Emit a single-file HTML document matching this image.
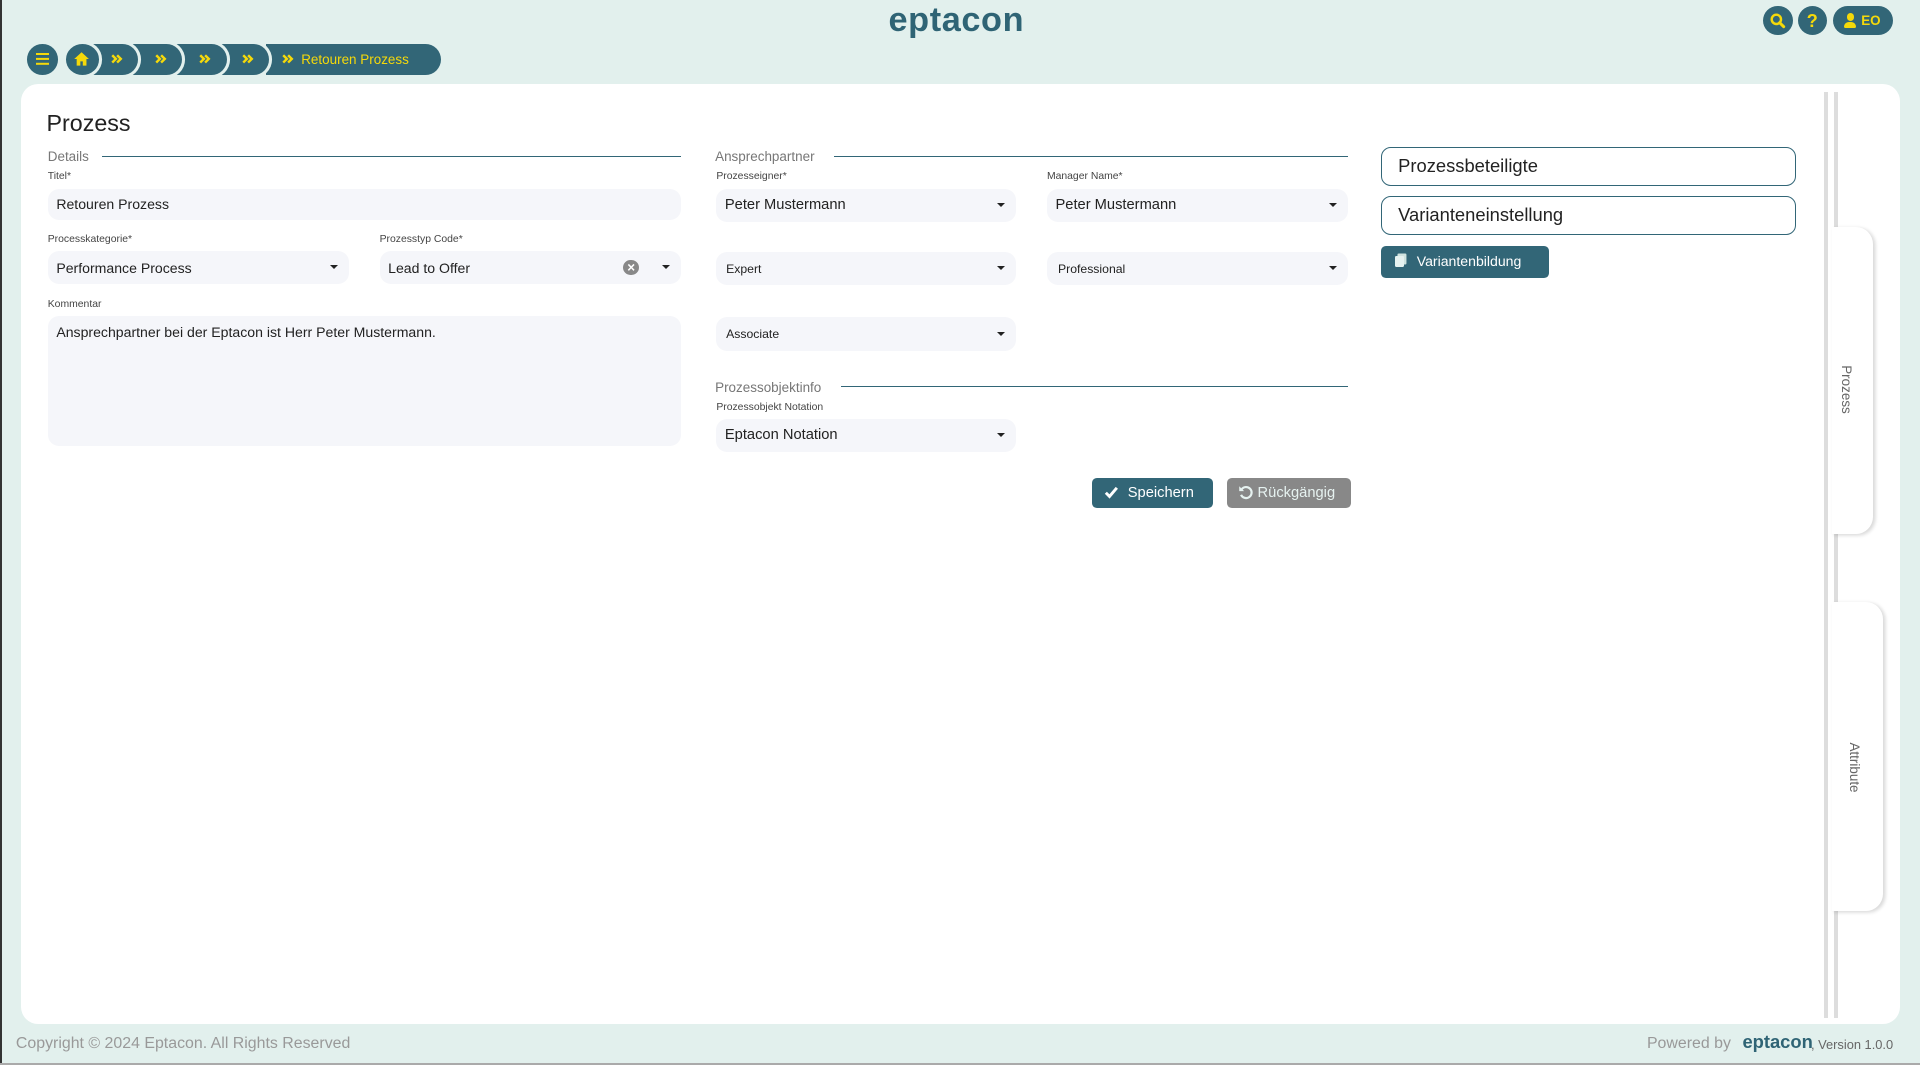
<!DOCTYPE html>
<html><head><meta charset="utf-8"><style>
html,body{margin:0;padding:0;width:1920px;height:1065px;overflow:hidden;background:#e2f0ed}
#w{position:absolute;left:0;top:0;width:1568px;height:870px;zoom:1.2244898;font-family:"Liberation Sans",sans-serif;color:#222}
.a{position:absolute}
.c{border-radius:50%;background:#326677}
.in{position:absolute;background:#f5f6fa;border-radius:9px;font-size:11.5px;color:#222;box-sizing:border-box;padding-left:7px;display:flex;align-items:center}
.lbl{position:absolute;font-size:8.5px;color:#444}
.sec{position:absolute;font-size:11px;color:#777}
.ln{position:absolute;height:1.2px;background:#326677}
.car{position:absolute;right:9px;top:50%;margin-top:-2px;width:0;height:0;border-left:3.5px solid transparent;border-right:3.5px solid transparent;border-top:4px solid #222}
.bc{position:absolute;top:36px;height:25px;background:#326677;border-radius:0 13px 13px 0;box-shadow:0 0 0 2.5px #e2f0ed;color:#f5d90a;font-size:11px;display:flex;align-items:center}
</style></head><body><div id="w">
<svg width="0" height="0" style="position:absolute"><defs><symbol id="ch" viewBox="0 0 10 8"><path d="M1 1l3 3-3 3M5 1l3 3-3 3" fill="none" stroke="#f5d90a" stroke-width="2"/></symbol></defs></svg>
<div class="a" style="left:0;top:0;width:2px;height:870px;background:#333"></div>
<div class="a" style="left:0;top:868px;width:1568px;height:2px;background:#aaa"></div>
<div class="a" style="left:700px;top:1px;width:162px;text-align:center;font-size:28px;font-weight:bold;color:#2f6475;letter-spacing:0.5px">eptacon</div>
<div class="a c" style="left:1440px;top:5px;width:24px;height:24px"></div>
<svg class="a" style="left:1445px;top:10px" width="14" height="14" viewBox="0 0 14 14"><circle cx="6" cy="6" r="3.8" fill="none" stroke="#f5d90a" stroke-width="2"/><path d="M8.7 8.7L12 12" stroke="#f5d90a" stroke-width="2.4" stroke-linecap="round"/></svg>
<div class="a c" style="left:1468px;top:5px;width:24px;height:24px;color:#f5d90a;font-weight:bold;font-size:15px;text-align:center;line-height:24px">?</div>
<div class="a" style="left:1497px;top:5px;width:49px;height:24px;border-radius:12px;background:#326677;color:#f5d90a;font-weight:bold;font-size:11px;line-height:24px"><span style="position:absolute;left:11px;top:6px;width:6px;height:6px;border-radius:50%;background:#f5d90a"></span><span style="position:absolute;left:9px;top:13px;width:10px;height:5px;border-radius:4px 4px 1px 1px;background:#f5d90a"></span><span style="position:absolute;left:23px">EO</span></div>

<div class="a c" style="left:22px;top:36px;width:25px;height:25px"></div>
<div class="a" style="left:29px;top:43px;width:11px;height:2px;background:#f5d90a;box-shadow:0 4px 0 #f5d90a,0 8px 0 #f5d90a"></div>
<div class="bc" style="left:217px;width:143px;padding-left:13px;box-sizing:border-box"><svg width="10" height="8" style="margin-right:6px"><use href="#ch"/></svg>Retouren Prozess</div>
<div class="bc" style="left:173px;width:47px;justify-content:center;padding-left:12px;box-sizing:border-box"><svg width="10" height="8"><use href="#ch"/></svg></div>
<div class="bc" style="left:138px;width:47px;justify-content:center;padding-left:12px;box-sizing:border-box"><svg width="10" height="8"><use href="#ch"/></svg></div>
<div class="bc" style="left:102px;width:47px;justify-content:center;padding-left:12px;box-sizing:border-box"><svg width="10" height="8"><use href="#ch"/></svg></div>
<div class="bc" style="left:66px;width:47px;justify-content:center;padding-left:12px;box-sizing:border-box"><svg width="10" height="8"><use href="#ch"/></svg></div>
<div class="bc" style="left:54px;width:27px;border-radius:50%"></div>
<svg class="a" style="left:60px;top:42px" width="14" height="13" viewBox="0 0 14 13"><path d="M7 1L1 6.5h2V12h3V8.5h2V12h3V6.5h2z" fill="#f5d90a"/></svg>

<div class="a" style="left:17px;top:69px;width:1535px;height:767px;background:#fff;border-radius:14px"></div>
<div class="a" style="left:1490px;top:75px;width:3px;height:756px;background:#ddd"></div>
<div class="a" style="left:1498px;top:75px;width:3px;height:756px;background:#ddd"></div>
<div class="a" style="left:1496px;top:185px;width:34px;height:251px;background:#fff;border-radius:0 14px 14px 0;box-shadow:2px 1px 3px rgba(0,0,0,.15)"></div>
<div class="a" style="left:1496px;top:492px;width:42px;height:252px;background:#fff;border-radius:0 14px 14px 0;box-shadow:2px 1px 3px rgba(0,0,0,.15)"></div>
<div class="a" style="left:1478px;top:312px;width:60px;font-size:11px;color:#666;transform:rotate(90deg);text-align:center">Prozess</div>
<div class="a" style="left:1485px;top:621px;width:60px;font-size:11px;color:#666;transform:rotate(90deg);text-align:center">Attribute</div>

<div class="a" style="left:38px;top:90px;font-size:19px;color:#222">Prozess</div>
<div class="sec" style="left:39px;top:122px">Details</div><div class="ln" style="left:83px;top:127px;width:473px"></div>
<div class="lbl" style="left:39px;top:140px">Titel*</div>
<div class="in" style="left:39px;top:154px;width:517px;height:26px">Retouren Prozess</div>
<div class="lbl" style="left:39px;top:191px">Processkategorie*</div>
<div class="in" style="left:39px;top:205px;width:246px;height:27px">Performance Process<span class="car"></span></div>
<div class="lbl" style="left:310px;top:191px">Prozesstyp Code*</div>
<div class="in" style="left:310px;top:205px;width:246px;height:27px">Lead to Offer<span class="car"></span><span style="position:absolute;right:34px;top:7px;width:13px;height:13px;border-radius:50%;background:#888;color:#fff;font-size:11px;line-height:13px;text-align:center;font-weight:bold">×</span></div>
<div class="lbl" style="left:39px;top:244px">Kommentar</div>
<div class="in" style="left:39px;top:258px;width:517px;height:106px;align-items:flex-start;padding-top:7px">Ansprechpartner bei der Eptacon ist Herr Peter Mustermann.</div>

<div class="sec" style="left:584px;top:122px">Ansprechpartner</div><div class="ln" style="left:681px;top:127px;width:420px"></div>
<div class="lbl" style="left:585px;top:140px">Prozesseigner*</div>
<div class="in" style="left:585px;top:154px;width:245px;height:27px;font-size:12px">Peter Mustermann<span class="car"></span></div>
<div class="lbl" style="left:855px;top:140px">Manager Name*</div>
<div class="in" style="left:855px;top:154px;width:246px;height:27px;font-size:12px">Peter Mustermann<span class="car"></span></div>
<div class="in" style="left:585px;top:206px;width:245px;height:27px;font-size:10px;padding-left:8px">Expert<span class="car"></span></div>
<div class="in" style="left:855px;top:206px;width:246px;height:27px;font-size:10px;padding-left:9px">Professional<span class="car"></span></div>
<div class="in" style="left:585px;top:259px;width:245px;height:28px;font-size:10px;padding-left:8px">Associate<span class="car"></span></div>
<div class="sec" style="left:584px;top:310px">Prozessobjektinfo</div><div class="ln" style="left:687px;top:315px;width:414px"></div>
<div class="lbl" style="left:585px;top:328px">Prozessobjekt Notation</div>
<div class="in" style="left:585px;top:342px;width:245px;height:27px;font-size:12px">Eptacon Notation<span class="car"></span></div>

<div class="a" style="left:892px;top:390px;width:99px;height:25px;background:#326677;border-radius:4px;color:#fff;font-size:12px;line-height:25px"><svg class="a" style="left:10px;top:7px" width="12" height="11" viewBox="0 0 12 11"><path d="M1.5 5.5l3 3 6-7" fill="none" stroke="#fff" stroke-width="2.4"/></svg><span style="position:absolute;left:29px">Speichern</span></div>
<div class="a" style="left:1002px;top:390px;width:101px;height:25px;background:#888;border-radius:4px;color:#e6f2f0;font-size:12px;line-height:25px"><svg class="a" style="left:9px;top:6px" width="13" height="13" viewBox="0 0 13 13"><path d="M3 3.5A4.5 4.5 0 1 1 2.5 8" fill="none" stroke="#e6f2f0" stroke-width="1.8"/><path d="M1 1v4h4z" fill="#e6f2f0"/></svg><span style="position:absolute;left:25px">Rückgängig</span></div>

<div class="a" style="left:1128px;top:120px;width:339px;height:32px;box-sizing:border-box;border:1px solid #326677;border-radius:8px;font-size:15px;line-height:30px;padding-left:13px;color:#222">Prozessbeteiligte</div>
<div class="a" style="left:1128px;top:160px;width:339px;height:32px;box-sizing:border-box;border:1px solid #326677;border-radius:8px;font-size:15px;line-height:30px;padding-left:13px;color:#222">Varianteneinstellung</div>
<div class="a" style="left:1128px;top:201px;width:137px;height:26px;background:#326677;border-radius:4px;color:#fff;font-size:11.5px;line-height:26px"><span style="position:absolute;left:11px;top:8px;width:8px;height:9px;background:#e6f2f0;border-radius:1px;box-shadow:2px -2px 0 #cfe3df"></span><span style="position:absolute;left:29px">Variantenbildung</span></div>

<div class="a" style="left:13px;top:845px;font-size:13px;color:#999">Copyright © 2024 Eptacon. All Rights Reserved</div>
<div class="a" style="left:1345px;top:845px;font-size:13px;color:#999">Powered by</div>
<div class="a" style="left:1423px;top:842px;font-size:15px;font-weight:bold;color:#2f6475">eptacon</div>
<div class="a" style="left:1479px;top:847px;font-size:10.5px;color:#666">, Version 1.0.0</div>
</div></body></html>
